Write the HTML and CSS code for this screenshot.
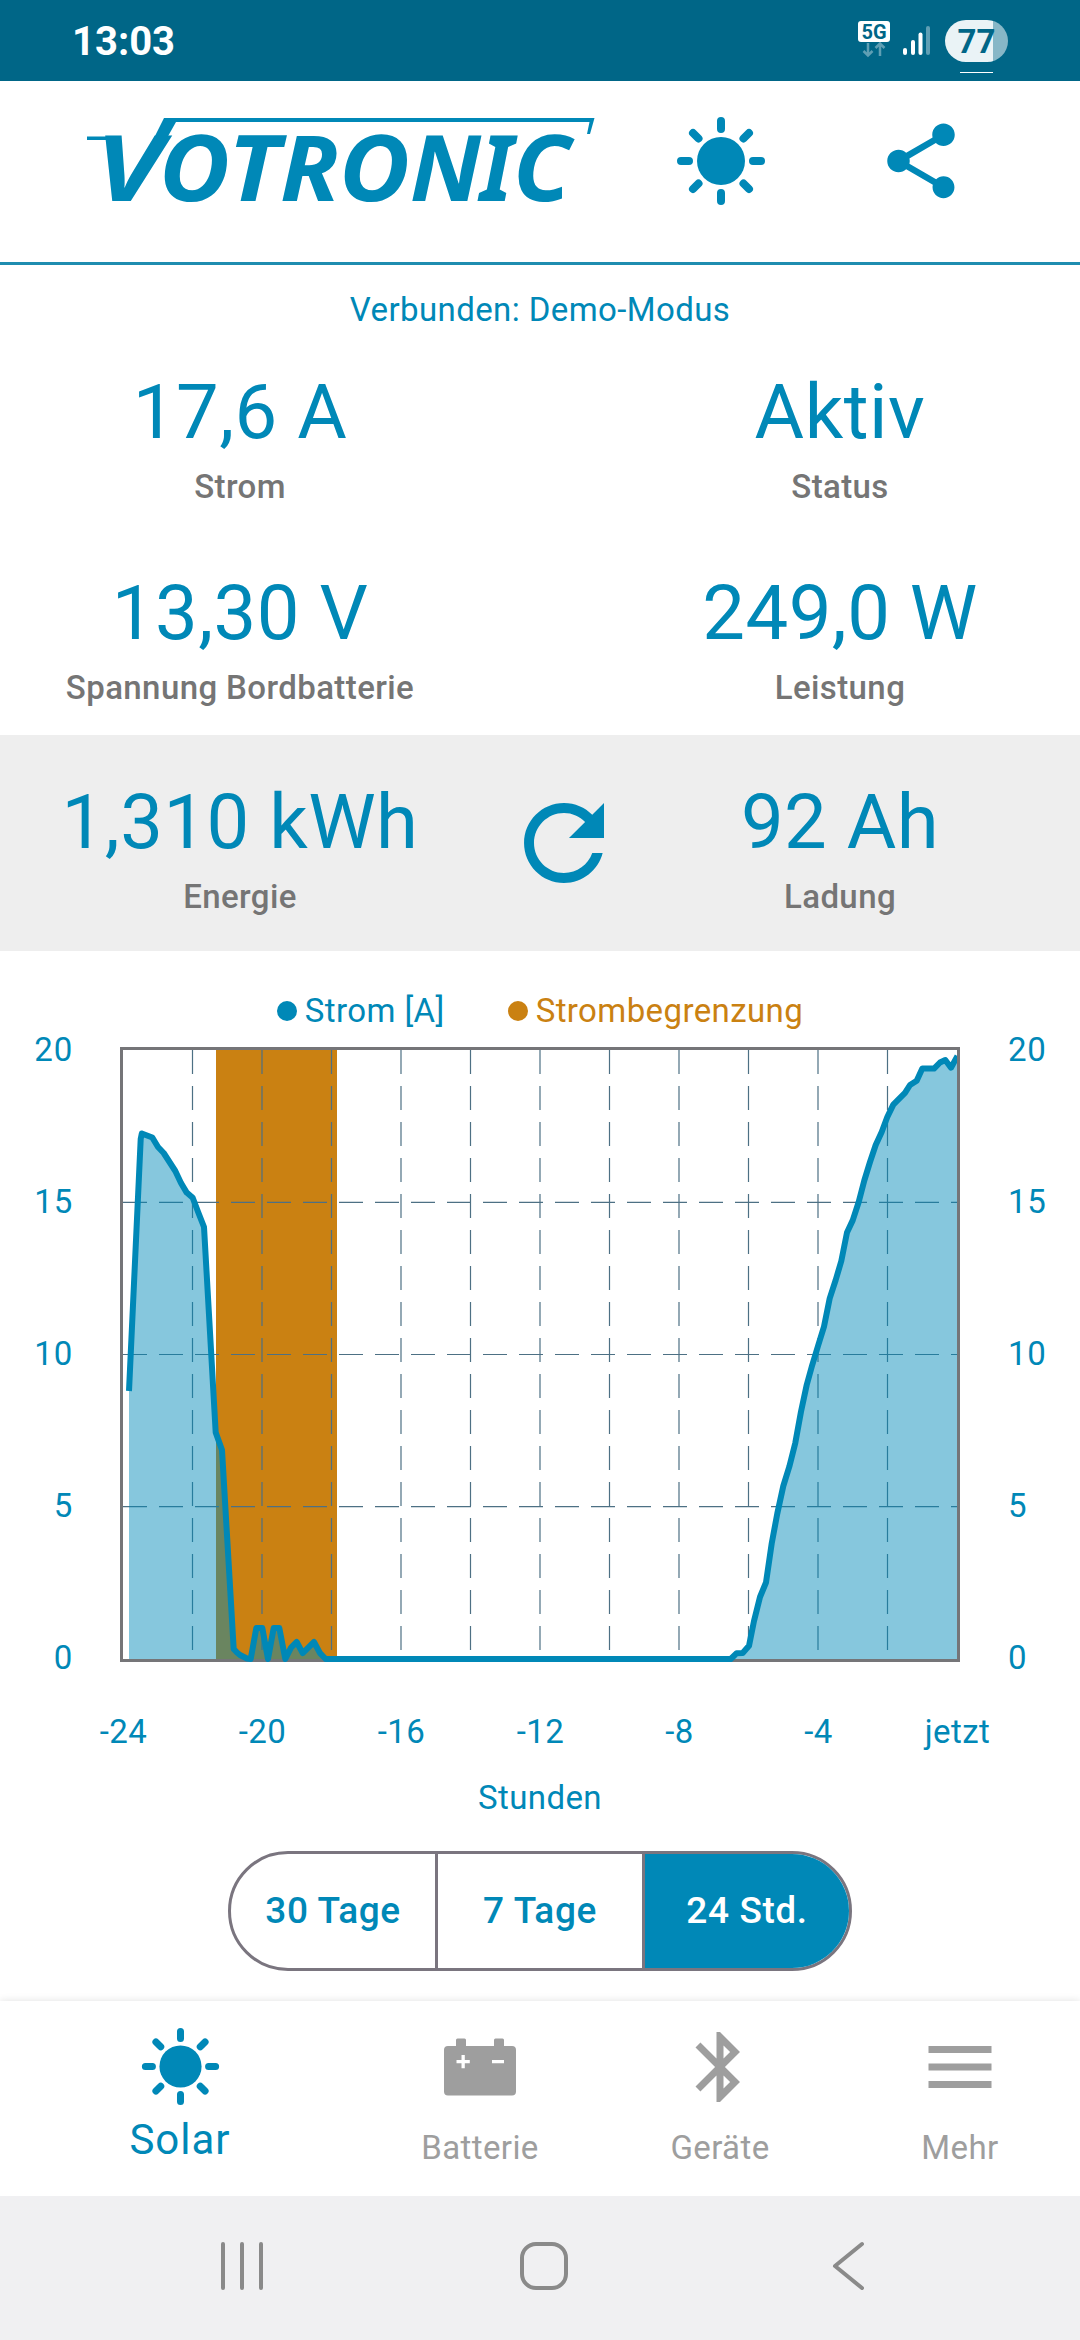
FILE: index.html
```
<!DOCTYPE html>
<html lang="de">

<head>
    <meta charset="UTF-8">
    <meta name="viewport" content="width=device-width, initial-scale=1.0">
    <title>Votronic</title>
    <link rel="stylesheet" href="styles.css">
</head>

<body>

    <!-- shared icons -->
    <svg class="sprite" width="0" height="0">
        <symbol id="sun" viewBox="0 0 90 90">
            <circle cx="45" cy="45" r="24" fill="currentColor" />
            <g stroke="currentColor" stroke-width="8" stroke-linecap="round">
                <path d="M45 5v8M45 77v8M5 45h8M77 45h8" />
                <path d="M17 17l5.500 5.500M67.500 67.500l5.500 5.500M17 73l5.500-5.500M67.500 22.500l5.500-5.500" />
            </g>
        </symbol>
    </svg>

    <div class="statusbar">
        <div class="time">13:03</div>
        <div class="network">
            <div class="badge">5G</div>
            <svg width="26" height="16" viewBox="0 0 26 16">
                <path d="M7 1v12M2.500 9l4.500 4.500L11.500 9M19 14V2M14.500 6L19 1.500 23.500 6" />
            </svg>
        </div>
        <svg class="signal" width="28" height="30" viewBox="0 0 28 30">
            <rect x="0" y="22" width="4" height="7" rx="2" />
            <rect x="8" y="14" width="4" height="15" rx="2" />
            <rect x="15.500" y="6.500" width="4" height="22.500" rx="2" />
            <rect class="off" x="23" y="0" width="4" height="29" rx="2" />
        </svg>
        <div class="battery">
            <div class="level">77</div>
            <div class="underline"></div>
        </div>
    </div>

    <div class="header">
        <svg class="logo" width="520" height="145" viewBox="0 -30 520 145">
            <path d="M7 20.500h32v3.500H7zM74 22L84 2h430.500l-4.500 16h-3l2.500-12H96L87 22z" />
            <g class="wordmark">
                <text x="15" y="85" textLength="67" lengthAdjust="spacingAndGlyphs">V</text>
                <text x="79" y="85" textLength="71" lengthAdjust="spacingAndGlyphs">O</text>
                <text x="148" y="85" textLength="52" lengthAdjust="spacingAndGlyphs">T</text>
                <text x="200" y="85" textLength="59" lengthAdjust="spacingAndGlyphs">R</text>
                <text x="259" y="85" textLength="71" lengthAdjust="spacingAndGlyphs">O</text>
                <text x="330" y="85" textLength="71" lengthAdjust="spacingAndGlyphs">N</text>
                <text x="400" y="85" textLength="33" lengthAdjust="spacingAndGlyphs">I</text>
                <text x="433" y="85" textLength="58" lengthAdjust="spacingAndGlyphs">C</text>
            </g>
        </svg>
        <svg class="icon_sun" width="90" height="90"><use href="#sun" /></svg>
        <svg class="icon_share" width="90" height="90" viewBox="0 0 24 24">
            <path d="M18 16.080c-.76 0-1.440.3-1.960.77L8.910 12.700c.05-.23.09-.46.09-.7s-.04-.47-.09-.7l7.050-4.110c.54.5 1.250.81 2.040.81 1.660 0 3-1.340 3-3s-1.340-3-3-3-3 1.340-3 3c0 .24.04.47.09.7L8.040 9.810C7.500 9.310 6.790 9 6 9c-1.660 0-3 1.340-3 3s1.340 3 3 3c.79 0 1.500-.31 2.040-.81l7.120 4.160c-.05.21-.08.43-.08.65 0 1.610 1.310 2.920 2.920 2.920s2.920-1.310 2.920-2.920-1.310-2.920-2.920-2.920z" />
        </svg>
    </div>

    <div class="connection">Verbunden: Demo-Modus</div>

    <div class="metrics">
        <div class="metric">
            <div class="value">17,6 A</div>
            <div class="label">Strom</div>
        </div>
        <div></div>
        <div class="metric">
            <div class="value">Aktiv</div>
            <div class="label">Status</div>
        </div>
        <div class="metric">
            <div class="value">13,30 V</div>
            <div class="label">Spannung Bordbatterie</div>
        </div>
        <div></div>
        <div class="metric">
            <div class="value">249,0 W</div>
            <div class="label">Leistung</div>
        </div>
    </div>

    <div class="metrics total">
        <div class="metric">
            <div class="value">1,310 kWh</div>
            <div class="label">Energie</div>
        </div>
        <svg class="icon_refresh" width="120" height="120" viewBox="0 0 24 24">
            <path d="M17.650 6.350C16.200 4.900 14.210 4 12 4c-4.420 0-7.990 3.580-7.990 8s3.570 8 7.990 8c3.730 0 6.840-2.550 7.730-6h-2.080c-.82 2.330-3.040 4-5.650 4-3.310 0-6-2.690-6-6s2.690-6 6-6c1.660 0 3.140.69 4.220 1.780L13 11h7V4l-2.350 2.350z" />
        </svg>
        <div class="metric">
            <div class="value">92 Ah</div>
            <div class="label">Ladung</div>
        </div>
    </div>

    <div class="legend">
        <div class="entry">Strom [A]</div>
        <div class="entry limit">Strombegrenzung</div>
    </div>

    <div class="chart">
        <div class="axis left">
            <span>20</span><span>15</span><span>10</span><span>5</span><span>0</span>
        </div>
        <svg class="plot" width="840" height="615" viewBox="0 0 840 615">
            <rect class="band" x="96" y="3" width="121" height="609" />
            <path class="grid" d="M72.500 3v609M142 3v609M211.500 3v609M281 3v609M350.500 3v609M420 3v609M489.500 3v609M559 3v609M628.500 3v609M698 3v609M767.500 3v609" />
            <path class="grid" d="M3 155.400h834M3 307.500h834M3 459.600h834" />
            <path class="area" id="area" />
            <path class="frame" d="M1.500 1.500h837v612h-837z" />
            <svg width="837" height="615">
                <polyline class="line" id="line" points="9,344 20.700,92 21.800,86.500 32.300,90.500 38,100 43.700,106 55.300,124 61,136 66.700,145.600 72.700,150.800 78.300,165.500 84,180 95.700,385.400 102,403 113.700,602 117,605.500 120,608 127,611.500 130.700,612 136.300,581 142.300,581 148,612 153.700,581 159.300,581 165.300,612 171,600.600 176.700,595 182.700,606.200 188.300,600.600 194,595 200,606.200 205.700,612 610.700,612 616.700,606.200 622.700,606 629,598.800 634,574 640,550 646,535.500 651.700,496.500 657.300,466.500 663.300,439 669.300,419.700 675.300,395.900 681,364.600 686.700,338 692.300,317.800 698,299 704,279.600 709.700,251.400 715.700,233 721.300,214 727,185.500 732.700,173.400 738.700,155 744.300,133.500 750,115 755.700,98 761.700,85 767.300,70 773.300,57.600 785,45.900 790,38 796.700,33.700 802.300,21.600 814,21.600 820,15.500 825.300,13 831,20.700 837.500,9" />
            </svg>
        </svg>
        <div class="axis right">
            <span>20</span><span>15</span><span>10</span><span>5</span><span>0</span>
        </div>
    </div>

    <div class="hours">
        <span>-24</span><span>-20</span><span>-16</span><span>-12</span><span>-8</span><span>-4</span><span>jetzt</span>
    </div>
    <div class="unit">Stunden</div>

    <div class="range">
        <button type="button" class="btn">30 Tage</button>
        <button type="button" class="btn">7 Tage</button>
        <button type="button" class="btn active">24 Std.</button>
    </div>

    <div class="tabs">
        <div class="tab active">
            <svg width="79" height="79"><use href="#sun" /></svg>
            <span>Solar</span>
        </div>
        <div class="tab">
            <svg width="84" height="84" viewBox="0 0 84 84">
                <path fill-rule="evenodd" d="M18 21v-6a1.500 1.500 0 0 1 1.500-1.500h7A1.500 1.500 0 0 1 28 15v6h28v-6a1.500 1.500 0 0 1 1.500-1.500h7A1.500 1.500 0 0 1 66 15v6h8a4 4 0 0 1 4 4v41.500a4 4 0 0 1-4 4H10a4 4 0 0 1-4-4V25a4 4 0 0 1 4-4zM23.500 30v5h-5v3.300h5v5h3.300v-5h5V35h-5v-5zM54 35v3.300h12V35z" />
            </svg>
            <span>Batterie</span>
        </div>
        <div class="tab">
            <svg width="84" height="84" viewBox="0 0 24 24">
                <path d="M17.710 7.710L12 2h-1v7.590L6.410 5 5 6.410 10.590 12 5 17.590 6.410 19 11 14.410V22h1l5.710-5.710-4.300-4.290 4.300-4.290zM13 5.830l1.880 1.880L13 9.590V5.830zm1.880 10.460L13 18.170v-3.760l1.880 1.880z" />
            </svg>
            <span>Geräte</span>
        </div>
        <div class="tab">
            <svg width="84" height="84" viewBox="0 0 24 24">
                <path d="M3 18h18v-2H3v2zm0-5h18v-2H3v2zm0-7v2h18V6H3z" />
            </svg>
            <span>Mehr</span>
        </div>
    </div>

    <div class="sysnav">
        <svg width="48" height="50" viewBox="0 0 48 50">
            <path d="M5 3v44M24 3v44M43 3v44" />
        </svg>
        <svg width="50" height="50" viewBox="0 0 50 50">
            <rect x="3" y="3" width="44" height="44" rx="14" />
        </svg>
        <svg width="34" height="50" viewBox="0 0 34 50">
            <path d="M31 3L4 25l27 22" />
        </svg>
    </div>

    <script>
        // fill below the curve, closed on the zero line
        const line = document.getElementById("line")
        const area = document.getElementById("area")
        area.setAttribute("d", "M9,612 L" + line.getAttribute("points") + " L837,612 Z")
    </script>

</body>

</html>
```
FILE: styles.css
```
* {
    margin: 0px;
    padding: 0px;
    box-sizing: border-box;
}

body {
    width: 1080px;
    height: 2340px;
    display: flex;
    flex-direction: column;
    overflow: hidden;
    background: #fff;
    color: #0088b7;
    font-family: Roboto, sans-serif;
    font-size: 33px;
    line-height: 40px;
    letter-spacing: 0.4px;
}

svg {
    display: block;
    flex: none;
    fill: currentColor;
}

.sprite {
    position: absolute;
}

.statusbar {
    height: 81px;
    flex: none;
    display: flex;
    align-items: flex-start;
    padding: 20px 72px 0 72px;
    background: #006687;
    color: #fff;
}

.time {
    flex: 1;
    font-size: 40px;
    font-weight: 700;
    line-height: 43px;
    letter-spacing: 0;
}

.network {
    width: 32px;
    margin: 1px 13px 0 0;
    display: flex;
    flex-direction: column;
    align-items: center;
}

.badge {
    width: 32px;
    height: 21px;
    border-radius: 3px;
    background: #fff;
    color: #006687;
    font-size: 20px;
    font-weight: 700;
    line-height: 22px;
    letter-spacing: 0;
    text-align: center;
}

.network path {
    fill: none;
    stroke: #5f9fb4;
    stroke-width: 2.500px;
}

.signal {
    margin: 6px 14px 0 0;
}

.signal .off {
    fill: #5f9fb4;
}

.battery {
    width: 63px;
}

.level {
    height: 42px;
    border-radius: 21px;
    background: linear-gradient(to right, #eaf3f6 48px, #87b7c7 48px);
    color: #006687;
    font-size: 33px;
    font-weight: 700;
    line-height: 43px;
    letter-spacing: 0;
    text-align: center;
}

.underline {
    width: 33px;
    height: 1px;
    margin: 10px 0 0 15px;
    background: #fff;
}

.header {
    height: 184px;
    flex: none;
    display: flex;
    padding: 35px 0 0 80px;
    border-bottom: 3px solid #1f8db0;
}

.logo {
    margin-top: -30px;
}

.wordmark text {
    font-family: "Noto Sans", "Open Sans", sans-serif;
    font-size: 91px;
    font-weight: 700;
    font-style: italic;
    letter-spacing: 0;
}

.icon_sun {
    margin-left: 76px;
}

.icon_share {
    margin-left: 110px;
}

.connection {
    margin-top: 20px;
    line-height: 50px;
    text-align: center;
}

.metrics {
    display: grid;
    grid-template-columns: 480px 170px 380px;
    row-gap: 61px;
    padding: 32px 0 27px 0;
}

.metric {
    text-align: center;
}

.value {
    font-size: 76px;
    line-height: 90px;
    letter-spacing: 0.5px;
}

.label {
    margin-top: 10px;
    color: #757575;
    font-weight: 500;
}

.total {
    padding: 42px 0 34px 0;
    background: #eeeeee;
}

.icon_refresh {
    margin: 6px 0 0 24px;
}

.legend {
    height: 39px;
    margin-top: 40px;
    display: flex;
    justify-content: center;
    gap: 63px;
}

.entry {
    display: flex;
    align-items: center;
    gap: 8px;
}

.entry:before {
    content: "";
    width: 20px;
    height: 20px;
    border-radius: 50%;
    background: currentColor;
}

.entry.limit {
    color: #ca8112;
}

.chart {
    height: 648px;
    display: flex;
    letter-spacing: 0.8px;
}

.axis {
    width: 120px;
    display: flex;
    flex-direction: column;
    justify-content: space-between;
}

.axis.left {
    padding-right: 47px;
    text-align: right;
}

.axis.right {
    padding-left: 48px;
}

.plot {
    margin-top: 17px;
}

.band {
    fill: #ca8112;
}

.grid {
    fill: none;
    stroke: #4d7084;
    stroke-width: 1.200px;
    stroke-dasharray: 24 12;
}

.area {
    fill: rgba(0, 138, 184, 0.475);
}

.frame {
    fill: none;
    stroke: #757578;
    stroke-width: 3px;
}

.line {
    fill: none;
    stroke: #0088b7;
    stroke-width: 6px;
    stroke-linejoin: round;
}

.hours {
    display: flex;
    margin: 34px 53px 0 54px;
}

.hours span {
    flex: 1;
    text-align: center;
}

.unit {
    margin-top: 26px;
    text-align: center;
}

.range {
    width: 624px;
    height: 120px;
    flex: none;
    display: flex;
    margin: 33px auto 0 auto;
    border: 3px solid #7a757f;
    border-radius: 60px;
    overflow: hidden;
}

.btn {
    flex: 1;
    padding-bottom: 2px;
    border: none;
    background: none;
    color: #0088b7;
    font-family: inherit;
    font-size: 37px;
    font-weight: 500;
    letter-spacing: 0.6px;
}

.btn + .btn {
    border-left: 3px solid #7a757f;
}

.btn.active {
    background: #0088b7;
    color: #fff;
}

.tabs {
    height: 195px;
    flex: none;
    display: flex;
    margin-top: 30px;
    background: #fff;
    box-shadow: 0 0 8px rgba(0, 0, 0, 0.12);
}

.tab {
    width: 240px;
    display: flex;
    flex-direction: column;
    align-items: center;
    padding-top: 24px;
    color: #9e9e9e;
}

.tab span {
    margin-top: 19px;
}

.tab.active {
    width: 360px;
    padding-top: 26px;
    color: #0088b7;
    font-size: 42px;
    letter-spacing: 1px;
}

.tab.active span {
    margin-top: 14px;
}

.sysnav {
    height: 144px;
    flex: none;
    display: flex;
    padding: 45px 0 0 218px;
    background: #f0f0f2;
    color: #8a8a8a;
}

.sysnav svg {
    fill: none;
    stroke: currentColor;
    stroke-width: 4px;
    stroke-linecap: round;
    stroke-linejoin: round;
}

.sysnav svg:nth-child(2) {
    margin-left: 253px;
}

.sysnav svg:nth-child(3) {
    margin-left: 262px;
}
```
